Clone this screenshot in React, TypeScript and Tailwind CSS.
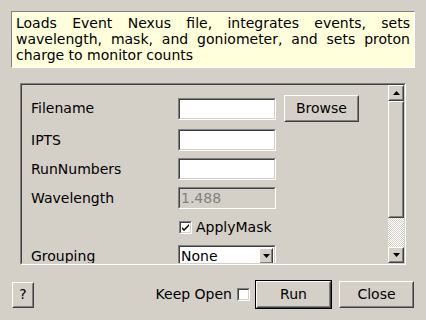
import type { ReactNode } from "react";

const FONT = "font-['DejaVu_Sans','Liberation_Sans',sans-serif]";

function Raised({ className = "", children }: { className?: string; children?: ReactNode }) {
  return (
    <div
      className={`border border-t-white border-l-white border-r-[#404040] border-b-[#404040] bg-[#d4d0c8] ${className}`}
    >
      <div className="flex h-full w-full items-center justify-center border border-t-[#d4d0c8] border-l-[#d4d0c8] border-r-[#808080] border-b-[#808080]">
        {children}
      </div>
    </div>
  );
}

function Sunken({
  className = "",
  inner = "bg-white",
  children,
}: {
  className?: string;
  inner?: string;
  children?: ReactNode;
}) {
  return (
    <div
      className={`border border-t-[#808080] border-l-[#808080] border-r-white border-b-white ${className}`}
    >
      <div
        className={`flex h-full w-full items-center border border-t-[#404040] border-l-[#404040] border-r-[#d4d0c8] border-b-[#d4d0c8] ${inner}`}
      >
        {children}
      </div>
    </div>
  );
}

function Arrow({ down = false }: { down?: boolean }) {
  return (
    <svg width="7" height="4" viewBox="0 0 7 4">
      <path d={down ? "M0 0h7L3.5 4z" : "M3.5 0L7 4H0z"} fill="#000" />
    </svg>
  );
}

function Check({ checked = false }: { checked?: boolean }) {
  return (
    <Sunken className="h-[13px] w-[13px]" inner="bg-white justify-center">
      {checked && (
        <svg width="7" height="7" viewBox="0 0 7 7">
          <path d="M0 3l2 2 5-5v2L2 7 0 5z" fill="#000" />
        </svg>
      )}
    </Sunken>
  );
}

const rows = [
  { label: "IPTS", value: "" },
  { label: "RunNumbers", value: "" },
];

export default function App() {
  return (
    <div className={`flex h-[320px] w-[426px] flex-col bg-[#d4d0c8] text-[14px] text-black ${FONT}`}>
      {/* algorithm description */}
      <div className="mx-[11px] mt-[11px] h-[57px] border border-t-[#808080] border-l-[#808080] border-r-white border-b-white bg-[#ffffdc] px-[4px] pt-[3px] text-justify leading-[16px]">
        Loads Event Nexus file, integrates events, sets wavelength, mask, and goniometer, and sets proton
        charge to monitor counts
      </div>

      {/* property scroll area */}
      <div className="ml-[20px] mt-[15px] h-[182px] w-[386px] border border-t-[#808080] border-l-[#808080] border-r-white border-b-white">
        <div className="flex h-full w-full border border-t-[#404040] border-l-[#404040] border-r-[#d4d0c8] border-b-[#d4d0c8]">
          <div className="flex flex-1 flex-col gap-[7px] overflow-hidden pl-[9px] pt-[10px]">
            <div className="flex h-[27px] shrink-0 items-center">
              <span className="w-[147px]">Filename</span>
              <Sunken className="h-[22px] w-[98px]" />
              <Raised className="ml-[8px] h-[27px] w-[75px]">Browse</Raised>
            </div>
            {rows.map((r) => (
              <div key={r.label} className="flex h-[22px] shrink-0 items-center">
                <span className="w-[147px]">{r.label}</span>
                <Sunken className="h-[22px] w-[98px]" />
              </div>
            ))}
            <div className="flex h-[22px] shrink-0 items-center">
              <span className="w-[147px]">Wavelength</span>
              <Sunken className="h-[22px] w-[98px]" inner="bg-[#d4d0c8] pl-[1px] text-[#808080]">
                1.488
              </Sunken>
            </div>
            <div className="flex h-[22px] shrink-0 items-center">
              <span className="w-[148px]" />
              <Check checked />
              <span className="ml-[4px]">ApplyMask</span>
            </div>
            <div className="flex h-[22px] shrink-0 items-center">
              <span className="w-[147px]">Grouping</span>
              <Sunken className="h-[22px] w-[98px]" inner="bg-white pl-[1px] pr-[1px]">
                <span className="flex-1">None</span>
                <Raised className="h-[16px] w-[14px]">
                  <Arrow down />
                </Raised>
              </Sunken>
            </div>
          </div>

          {/* vertical scrollbar */}
          <div className="flex w-[16px] flex-col">
            <Raised className="h-[16px] w-[16px] shrink-0">
              <Arrow />
            </Raised>
            <Raised className="h-[117px] w-[16px] shrink-0" />
            <div className="flex-1 bg-[image:repeating-conic-gradient(#ffffff_0_25%,#d4d0c8_0_50%)] bg-size-[2px_2px]" />
            <Raised className="h-[16px] w-[16px] shrink-0">
              <Arrow down />
            </Raised>
          </div>
        </div>
      </div>

      {/* bottom buttons */}
      <div className="mt-[15px] flex items-center px-[12px]">
        <Raised className="h-[26px] w-[22px]">?</Raised>
        <div className="ml-auto flex items-center">
          <span>Keep Open</span>
          <span className="ml-[5px]">
            <Check />
          </span>
          <div className="ml-[5px] border border-black">
            <Raised className="h-[27px] w-[75px]">Run</Raised>
          </div>
          <Raised className="ml-[7px] h-[27px] w-[75px]">Close</Raised>
        </div>
      </div>
    </div>
  );
}
